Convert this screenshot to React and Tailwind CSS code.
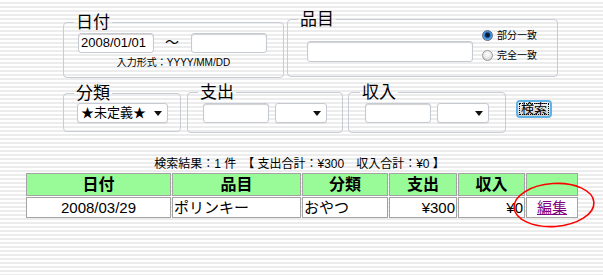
import React from "react";

// Search form + result table (pinstripe background)
const FONT = { fontFamily: '"Liberation Sans","Noto Sans CJK JP",sans-serif' };

const TextBox = ({ value = "", className = "" }) => (
  <input
    readOnly
    value={value}
    className={`block bg-white border border-[#c5cad2] rounded-[3px] shadow-[inset_0_1px_1px_rgba(0,0,0,0.18)] text-[13px] leading-[16px] px-[2px] text-black outline-none ${className}`}
    style={FONT}
  />
);

const Select = ({ value = "", className = "" }) => (
  <div
    className={`flex items-center justify-between bg-white border border-[#c5cad2] rounded-[3px] shadow-[0_1px_0_rgba(0,0,0,0.06)] text-[13px] leading-[16px] pl-[3px] pr-[5px] text-black whitespace-nowrap ${className}`}
  >
    <span>{value}</span>
    <svg width="8" height="5" viewBox="0 0 8 5">
      <path d="M0 0 L8 0 L4 5 Z" fill="#111" />
    </svg>
  </div>
);

const Radio = ({ checked }) =>
  checked ? (
    <span className="inline-block w-[11px] h-[11px] rounded-full border border-[#5b6b82] bg-[radial-gradient(circle_at_50%_45%,#0b1f3a_0px,#0b1f3a_2px,#2d7fd0_3px,#8cc8f5_6px)]" />
  ) : (
    <span className="inline-block w-[11px] h-[11px] rounded-full border border-[#9a9a9a] bg-[radial-gradient(circle_at_50%_35%,#ffffff_0px,#e6e6e6_4px,#bdbdbd_7px)]" />
  );

const Box = ({ label, className = "", legendClass = "", children }) => (
  <fieldset className={`border border-[#c8ccd4] rounded-[4px] ${className}`}>
    <legend className={`px-[2px] text-[17px] leading-[17px] text-black ${legendClass}`}>
      {label}
    </legend>
    {children}
  </fieldset>
);

const App = () => {
  const headers = ["日付", "品目", "分類", "支出", "収入", ""];
  const widths = ["w-[145px]", "w-[129px]", "w-[86px]", "w-[68px]", "w-[67px]", "w-[52px]"];

  return (
    <div
      className="relative w-[603px] h-[275px] overflow-hidden bg-[repeating-linear-gradient(180deg,#ffffff_0px,#ffffff_2px,#ececec_2px,#ececec_4px)] text-black"
      style={FONT}
    >
      {/* Row 1: 日付 / 品目 */}
      <div className="flex items-start pl-[63px] pt-[11px] gap-[3px]">
        <Box label="日付" className="w-[221px] h-[64px] mt-[3px]" legendClass="ml-[10px]">
          <div className="flex items-center pl-[14px] mt-[1px]">
            <TextBox value="2008/01/01" className="w-[76px] h-[20px]" />
            <span className="ml-[11px] text-[14px]">〜</span>
            <TextBox className="w-[76px] h-[20px] ml-[12px]" />
          </div>
          <div className="text-center text-[10px] leading-[12px] mt-[4px]">入力形式：YYYY/MM/DD</div>
        </Box>

        <Box label="品目" className="w-[271px] h-[66px]" legendClass="ml-[10px]">
          <div className="flex items-start pl-[19px] mt-[2px]">
            <TextBox className="w-[166px] h-[21px] mt-[11px]" />
            <div className="ml-[9px] flex flex-col gap-[9px] text-[10px] leading-[11px]">
              <label className="flex items-center gap-[4px]">
                <Radio checked />
                部分一致
              </label>
              <label className="flex items-center gap-[4px]">
                <Radio />
                完全一致
              </label>
            </div>
          </div>
        </Box>
      </div>

      {/* Row 2: 分類 / 支出 / 収入 / 検索 */}
      <div className="flex items-start pl-[63px] mt-[6px]">
        <Box label="分類" className="w-[118px] h-[47px] mt-[1px]" legendClass="ml-[10px]">
          <Select value="★未定義★" className="w-[91px] h-[20px] ml-[13px] mt-[1px]" />
        </Box>
        <Box label="支出" className="w-[156px] h-[49px] ml-[6px]" legendClass="ml-[10px]">
          <div className="flex items-center pl-[15px] gap-[6px] mt-[2px]">
            <TextBox className="w-[66px] h-[20px]" />
            <Select className="w-[52px] h-[20px]" />
          </div>
        </Box>
        <Box label="収入" className="w-[158px] h-[49px] ml-[5px]" legendClass="ml-[11px]">
          <div className="flex items-center pl-[16px] gap-[6px] mt-[2px]">
            <TextBox className="w-[66px] h-[20px]" />
            <Select className="w-[52px] h-[20px]" />
          </div>
        </Box>
        <button className="ml-[10px] mt-[16px] w-[36px] h-[18px] rounded-[4px] border-2 border-[#5fb2e6] bg-[linear-gradient(#f4f4f4,#cfcfcf)] p-[1px]">
          <span className="flex items-center justify-center w-full h-full border border-dotted border-black text-[13px] leading-[12px]">
            検索
          </span>
        </button>
      </div>

      {/* Result summary */}
      <div className="mt-[25px] text-center text-[12px] leading-[13px] pr-[4px]">
        検索結果：1 件　【 支出合計：¥300　収入合計：¥0 】
      </div>

      {/* Result table */}
      <table className="ml-[25px] mt-[1px] border-separate border-spacing-[1px] border-0">
        <thead>
          <tr>
            {headers.map((h, i) => (
              <th
                key={i}
                className={`${widths[i]} h-[23px] p-0 bg-[#98fb98] border border-[#a3a3a3] text-[16px] leading-[18px] font-bold text-center`}
              >
                {h}
              </th>
            ))}
          </tr>
        </thead>
        <tbody>
          <tr className="text-[15px] leading-[18px]">
            <td className="h-[21px] p-0 bg-white border border-[#a3a3a3] text-center">2008/03/29</td>
            <td className="h-[21px] p-0 pl-[1px] bg-white border border-[#a3a3a3]">ポリンキー</td>
            <td className="h-[21px] p-0 pl-[1px] bg-white border border-[#a3a3a3]">おやつ</td>
            <td className="h-[21px] p-0 pr-[1px] bg-white border border-[#a3a3a3] text-right">¥300</td>
            <td className="h-[21px] p-0 pr-[1px] bg-white border border-[#a3a3a3] text-right">¥0</td>
            <td className="h-[21px] p-0 bg-white border border-[#a3a3a3] text-center">
              <a href="#" className="text-[#800080] underline">編集</a>
            </td>
          </tr>
        </tbody>
      </table>

      {/* Red annotation circle */}
      <svg className="absolute left-[510px] top-[179px]" width="90" height="52" viewBox="0 0 90 52">
        <ellipse
          cx="44"
          cy="26"
          rx="40"
          ry="21.5"
          transform="rotate(-4 44 26)"
          fill="none"
          stroke="#ff0000"
          strokeWidth="1.6"
        />
      </svg>
    </div>
  );
};

export default App;
